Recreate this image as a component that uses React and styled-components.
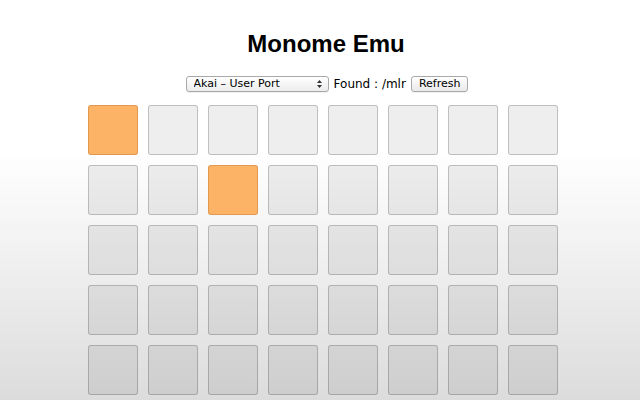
import React, { useState } from "react";
import styled, { createGlobalStyle } from "styled-components";

const GlobalStyle = createGlobalStyle`
  html, body {
    margin: 0;
    padding: 0;
  }
  body {
    min-height: 400px;
    background: linear-gradient(to bottom, #ffffff 0%, #ffffff 38%, #dcdcdc 100%);
    font-family: "DejaVu Sans", "Liberation Sans", sans-serif;
    color: #000;
    overflow: hidden;
  }
`;

const Page = styled.main`
  display: flex;
  flex-direction: column;
  align-items: center;
  padding: 30px 0 0 12px;
  height: 400px;
  box-sizing: border-box;
`;

const Title = styled.h1`
  margin: 0;
  font-family: "Liberation Sans", Arial, sans-serif;
  font-size: 24px;
  line-height: 28px;
  font-weight: bold;
`;

const Controls = styled.div`
  display: flex;
  align-items: center;
  gap: 5px;
  margin: 18px 0 0 2px;
  height: 16px;
  font-size: 12px;
`;

const SelectWrap = styled.div`
  position: relative;
  width: 143px;
  height: 16px;
`;

const Select = styled.select`
  appearance: none;
  width: 100%;
  height: 100%;
  margin: 0;
  padding: 0 0 0 7px;
  border: 1px solid #a9a9a9;
  border-radius: 3px;
  background: linear-gradient(to bottom, #ffffff, #ececec);
  font-family: "DejaVu Sans", sans-serif;
  font-size: 11px;
  line-height: 14px;
  color: #000;
  box-shadow: 0 1px 0 rgba(0, 0, 0, 0.06);
`;

const Arrows = styled.svg`
  position: absolute;
  right: 7px;
  top: 4px;
  pointer-events: none;
`;

const Found = styled.span`
  white-space: nowrap;
`;

const Button = styled.button`
  height: 16px;
  margin: 0;
  padding: 0 7px;
  border: 1px solid #a9a9a9;
  border-radius: 3px;
  background: linear-gradient(to bottom, #ffffff, #e9e9e9);
  font-family: "DejaVu Sans", sans-serif;
  font-size: 11px;
  line-height: 14px;
  color: #000;
  box-shadow: 0 1px 0 rgba(0, 0, 0, 0.06);
`;

const Grid = styled.div`
  display: grid;
  grid-template-columns: repeat(8, 50px);
  grid-auto-rows: 50px;
  gap: 10px;
  margin: 13px 0 0 -7px;
`;

const Pad = styled.button`
  width: 50px;
  height: 50px;
  padding: 0;
  box-sizing: border-box;
  border: 1px solid ${(p) => (p.$lit ? "rgba(190, 120, 50, 0.45)" : "rgba(0, 0, 0, 0.2)")};
  border-radius: 3px;
  background: ${(p) => (p.$lit ? "#fdb366" : "rgba(0, 0, 0, 0.065)")};
  cursor: pointer;
`;

const ROWS = 5;
const COLS = 8;

export default function App() {
  const [lit, setLit] = useState(["0-0", "1-2"]);

  const toggle = (key) =>
    setLit((prev) => (prev.includes(key) ? prev.filter((k) => k !== key) : [...prev, key]));

  const pads = [];
  for (let r = 0; r < ROWS; r++) {
    for (let c = 0; c < COLS; c++) {
      const key = `${r}-${c}`;
      pads.push(<Pad key={key} $lit={lit.includes(key)} onClick={() => toggle(key)} />);
    }
  }

  return (
    <>
      <GlobalStyle />
      <Page>
        <Title>Monome Emu</Title>
        <Controls>
          <SelectWrap>
            <Select defaultValue="akai">
              <option value="akai">Akai – User Port</option>
            </Select>
            <Arrows width="5" height="8" viewBox="0 0 5 8">
              <path d="M2.5 0 L5 3 H0 Z M2.5 8 L5 5 H0 Z" fill="#333" />
            </Arrows>
          </SelectWrap>
          <Found>Found : /mlr</Found>
          <Button>Refresh</Button>
        </Controls>
        <Grid>{pads}</Grid>
      </Page>
    </>
  );
}
